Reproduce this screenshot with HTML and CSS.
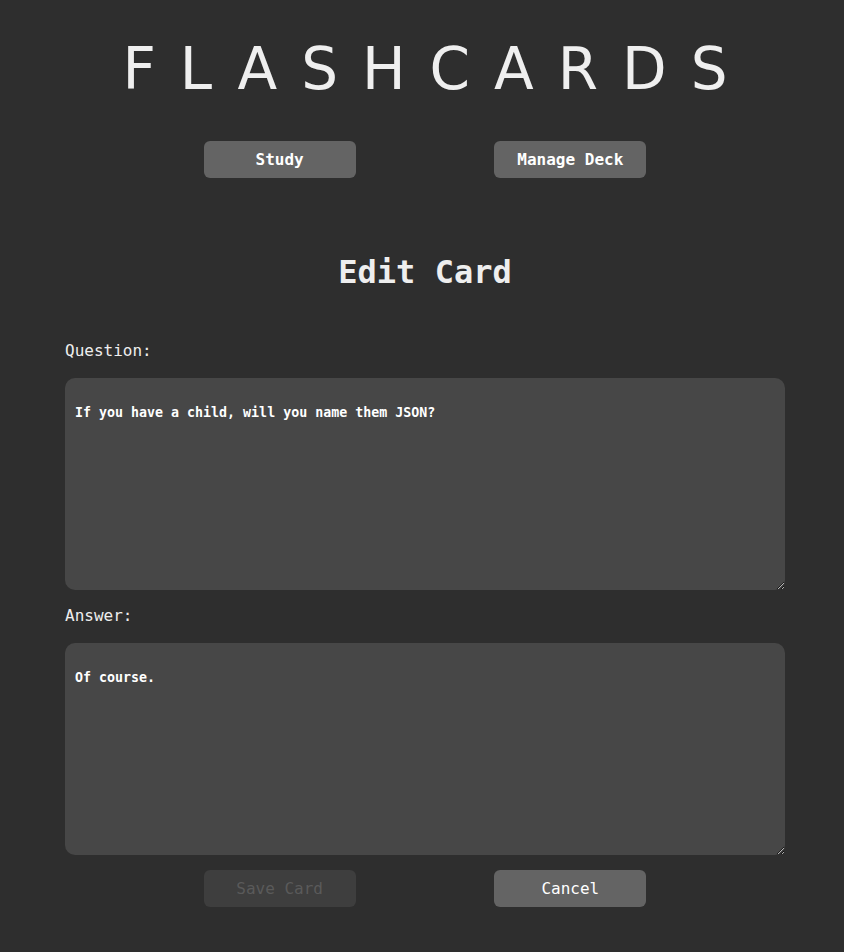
FILE: index.html
```html
<!DOCTYPE html>
<html lang="en">
<head>
<meta charset="utf-8">
<title>Flashcards</title>
<link rel="stylesheet" href="styles.css">
</head>
<body>
<div class="page">
  <h1 class="title">FLASHCARDS</h1>
  <nav class="tabs">
    <button class="btn btn-bold" type="button">Study</button>
    <button class="btn btn-bold" type="button">Manage Deck</button>
  </nav>
  <main class="editor">
    <h2 class="heading">Edit Card</h2>
    <form class="card-form">
      <label class="label" for="q">Question:</label>
      <textarea class="field" id="q">If you have a child, will you name them JSON?</textarea>
      <label class="label" for="a">Answer:</label>
      <textarea class="field" id="a">Of course.</textarea>
      <div class="actions">
        <button class="btn btn-disabled" type="button" disabled>Save Card</button>
        <button class="btn" type="button">Cancel</button>
      </div>
    </form>
  </main>
</div>
</body>
</html>
```

FILE: styles.css
```css
html, body {
  margin: 0;
  padding: 0;
  background: #2e2e2e;
  color: #eeeeee;
  font-family: "DejaVu Sans Mono", "Liberation Mono", monospace;
}

.page {
  width: 720px;
  padding: 39px 0 0 65px;
}

.title {
  margin: 0;
  text-align: center;
  font-family: "DejaVu Sans", Roboto, sans-serif;
  font-weight: normal;
  font-size: 58px;
  line-height: 60px;
  letter-spacing: 24px;
  padding-left: 24px;
  color: #efefef;
}

.tabs {
  display: flex;
  justify-content: space-evenly;
  margin-top: 42px;
}

.btn {
  width: 152px;
  height: 37px;
  border: none;
  border-radius: 6px;
  background: #646464;
  color: #ffffff;
  font-family: "DejaVu Sans Mono", "Liberation Mono", monospace;
  font-size: 16px;
  padding: 0;
}

.btn-bold {
  font-weight: bold;
}

.btn-disabled {
  background: #3e3e3e;
  color: #5a5a5a;
}

.heading {
  margin: 74px 0 0;
  text-align: center;
  font-size: 32px;
  line-height: 40px;
  font-weight: bold;
  color: #eeeeee;
}

.card-form {
  display: flex;
  flex-direction: column;
  margin-top: 49px;
}

.label {
  font-size: 16px;
  line-height: 20px;
  color: #eeeeee;
  margin-bottom: 17px;
}

.field {
  box-sizing: border-box;
  width: 720px;
  height: 212px;
  margin: 0 0 16px;
  border: none;
  border-radius: 10px;
  background: #474747;
  color: #ffffff;
  font-family: "DejaVu Sans Mono", "Liberation Mono", monospace;
  font-size: 13.3px;
  font-weight: bold;
  padding: 27px 10px 10px;
  outline: none;
}

.actions {
  display: flex;
  justify-content: space-evenly;
  margin-top: -1px;
}
```
